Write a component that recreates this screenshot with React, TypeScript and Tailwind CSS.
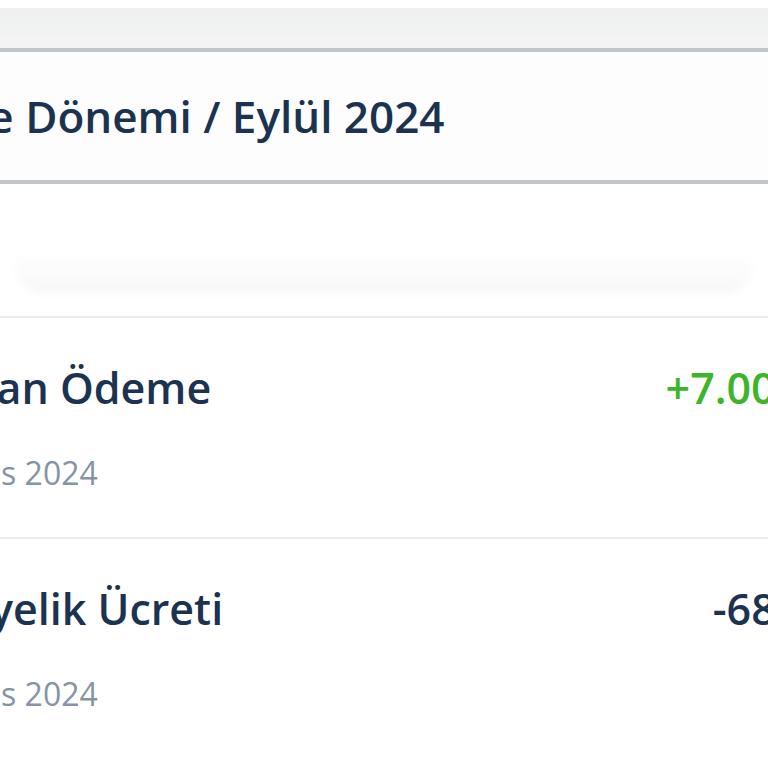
const font = { fontFamily: '"Open Sans", "Noto Sans", sans-serif' };

interface Txn {
  id: string;
  title: string;
  date: string;
  amount: string;
  positive: boolean;
}

const txns: Txn[] = [
  { id: "1", title: "Aktarılan Ödeme", date: "30 Ağustos 2024", amount: "+7.000,00 TL", positive: true },
  { id: "2", title: "Üyelik Ücreti", date: "30 Ağustos 2024", amount: "-689,99 TL", positive: false },
];

function TxnRow({ txn, titleShift }: { txn: Txn; titleShift: string }) {
  return (
    <li className="h-[221px] border-t-2 border-[#ececec] overflow-hidden">
      <div className="w-[920px] flex justify-between">
        <div className="flex flex-col">
          <span className={`mt-[42px] text-[43px] leading-[56px] font-semibold text-[#1b3350] whitespace-nowrap ${titleShift}`}>
            {txn.title}
          </span>
          <span className="mt-[35px] ml-[-147px] text-[32px] leading-[44px] font-medium text-[#8494a6] whitespace-nowrap">
            {txn.date}
          </span>
        </div>
        <span
          className={`mt-[42px] text-[43px] leading-[56px] font-semibold whitespace-nowrap ${
            txn.positive ? "text-[#3db52a]" : "text-[#1b3350]"
          }`}
        >
          {txn.amount}
        </span>
      </div>
    </li>
  );
}

export default function App() {
  return (
    <div className="w-[768px] h-[768px] bg-white overflow-hidden" style={font}>
      <div className="h-[8px] bg-white" />
      <div className="h-[40px] bg-linear-to-b from-[#eeefef] to-[#f5f5f5]" />

      {/* Period header */}
      <div className="h-[136px] border-y-4 border-[#c1c6ca] bg-[#fdfdfd] flex items-center overflow-hidden">
        <span className="ml-[-141px] text-[44px] leading-[56px] font-semibold text-[#1b3350] whitespace-nowrap">
          Ödeme Dönemi / Eylül 2024
        </span>
      </div>

      {/* Summary card edge */}
      <div className="h-[132px] flex flex-col">
        <div className="mt-[66px] mx-[14px] h-[44px] rounded-b-[30px] bg-linear-to-b from-white to-[#f8f8f8] blur-[3px]" />
      </div>

      <ul>
        <TxnRow txn={txns[0]} titleShift="ml-[-141px]" />
        <TxnRow txn={txns[1]} titleShift="ml-[-42px]" />
      </ul>
    </div>
  );
}
